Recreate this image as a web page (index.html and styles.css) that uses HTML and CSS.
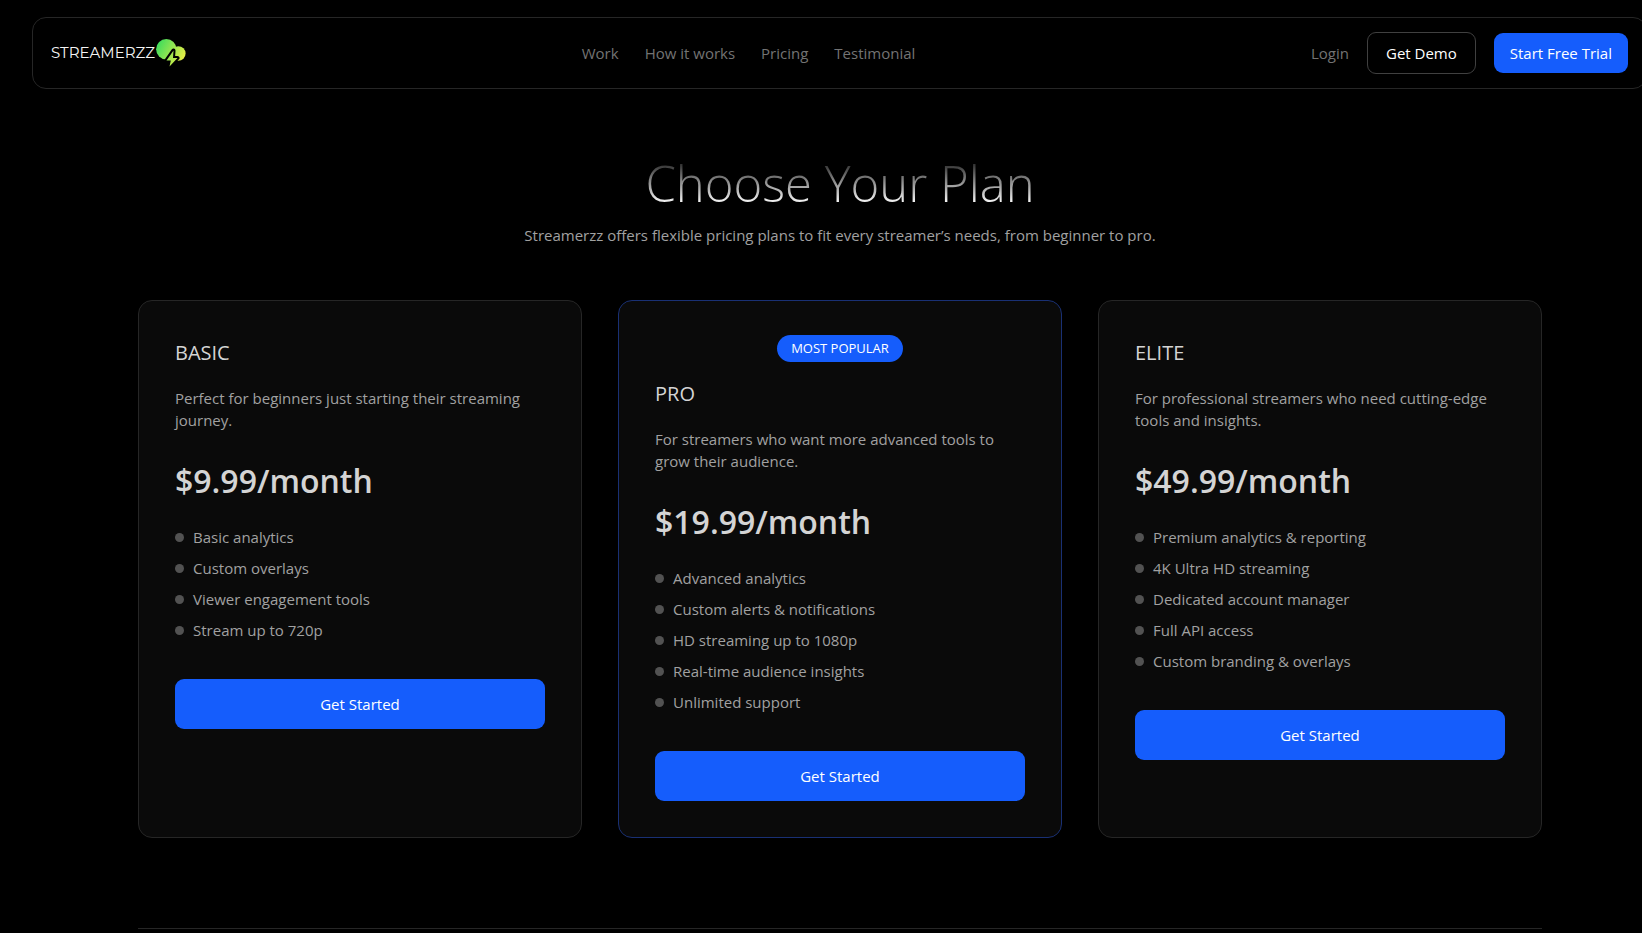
FILE: index.html
```html
<!DOCTYPE html>
<html lang="en">
<head>
<meta charset="utf-8">
<meta name="viewport" content="width=device-width, initial-scale=1">
<title>Streamerzz – Pricing</title>
<link rel="stylesheet" href="styles.css">
</head>
<body>
<header class="navbar">
  <a class="logo" href="#">
    <span class="logo-text">STREAMERZZ</span>
    <svg class="logo-mark" viewBox="0 0 30 28" aria-hidden="true">
      <defs>
        <linearGradient id="mark" x1="0" y1="0" x2="30" y2="16" gradientUnits="userSpaceOnUse">
          <stop offset="0.1" stop-color="#3fdc5c"/>
          <stop offset="1" stop-color="#e8ee45"/>
        </linearGradient>
      </defs>
      <g fill="url(#mark)">
        <circle cx="10.300" cy="10.300" r="10.200"/>
        <circle cx="22.300" cy="14.500" r="7.300"/>
        <path d="M17.500 11.500L10.500 21.500H14.800L13.500 27.500L21.500 19H17Z" stroke="#000" stroke-width="4" stroke-linejoin="round" paint-order="stroke"/>
      </g>
    </svg>
  </a>
  <nav class="nav-links" aria-label="Main">
    <a href="#">Work</a>
    <a href="#">How it works</a>
    <a href="#">Pricing</a>
    <a href="#">Testimonial</a>
  </nav>
  <div class="nav-actions">
    <a href="#">Login</a>
    <button class="btn btn-outline" type="button">Get Demo</button>
    <button class="btn btn-primary" type="button">Start Free Trial</button>
  </div>
</header>
<main class="page">
  <section class="pricing">
    <div class="intro">
      <h1>Choose Your Plan</h1>
      <p>Streamerzz offers flexible pricing plans to fit every streamer’s needs, from beginner to pro.</p>
    </div>
    <div class="plans">
      <article class="plan">
        <h2>BASIC</h2>
        <p class="plan-desc">Perfect for beginners just starting their streaming journey.</p>
        <p class="price">$9.99/month</p>
        <ul class="features">
          <li>Basic analytics</li>
          <li>Custom overlays</li>
          <li>Viewer engagement tools</li>
          <li>Stream up to 720p</li>
        </ul>
        <button class="btn btn-primary btn-wide" type="button">Get Started</button>
      </article>
      <article class="plan plan-popular">
        <span class="badge">MOST POPULAR</span>
        <h2>PRO</h2>
        <p class="plan-desc">For streamers who want more advanced tools to grow their audience.</p>
        <p class="price">$19.99/month</p>
        <ul class="features">
          <li>Advanced analytics</li>
          <li>Custom alerts &amp; notifications</li>
          <li>HD streaming up to 1080p</li>
          <li>Real-time audience insights</li>
          <li>Unlimited support</li>
        </ul>
        <button class="btn btn-primary btn-wide" type="button">Get Started</button>
      </article>
      <article class="plan">
        <h2>ELITE</h2>
        <p class="plan-desc">For professional streamers who need cutting-edge tools and insights.</p>
        <p class="price">$49.99/month</p>
        <ul class="features">
          <li>Premium analytics &amp; reporting</li>
          <li>4K Ultra HD streaming</li>
          <li>Dedicated account manager</li>
          <li>Full API access</li>
          <li>Custom branding &amp; overlays</li>
        </ul>
        <button class="btn btn-primary btn-wide" type="button">Get Started</button>
      </article>
    </div>
  </section>
  <footer class="footer"></footer>
</main>
</body>
</html>
```
FILE: styles.css
```css
*, *::before, *::after { box-sizing: border-box; }

html { background: #000; }

body {
  margin: 0;
  overflow-x: hidden;
  background: #000;
  color: #a1a1a1;
  font: 400 15px/22px "Segoe UI", "Open Sans", "Noto Sans", sans-serif;
}

h1, h2, p, ul { margin: 0; padding: 0; }
a { color: inherit; text-decoration: none; }

.navbar {
  display: flex;
  align-items: center;
  justify-content: space-between;
  margin: 17px -5px 0 32px;
  padding: 14px 18px;
  border: 1px solid #262626;
  border-radius: 14px;
  color: #737373;
}

.logo { display: flex; align-items: center; gap: 1px; color: #f5f5f5; }
.logo-text { font: 400 15px/24px Montserrat, "Open Sans", sans-serif; }
.logo-mark { width: 30px; height: 28px; }

.nav-links { display: flex; gap: 26px; }
.nav-actions { display: flex; align-items: center; gap: 18px; }

.btn {
  padding: 9px 16px;
  border: 0;
  border-radius: 9px;
  color: #fff;
  font: inherit;
  cursor: pointer;
}
.btn-outline { padding: 9px 18px; border: 1px solid #404040; background: transparent; font-weight: 500; }
.btn-primary { background: #155dfc; }
.btn-wide { width: 100%; padding: 14px 18px; }

.page { padding: 0 100px 0 138px; }
.pricing { padding: 62px 0 90px; }

.intro { display: flex; flex-direction: column; align-items: center; gap: 9px; text-align: center; }

h1 {
  font-size: 49px;
  font-weight: 300;
  line-height: 64px;
  background: linear-gradient(to bottom, #303030 20%, #f5f5f5 80%);
  -webkit-background-clip: text;
  background-clip: text;
  color: transparent;
}

.plans {
  display: grid;
  grid-template-columns: repeat(3, minmax(0, 1fr));
  gap: 36px;
  margin-top: 54px;
}

.plan {
  display: flex;
  flex-direction: column;
  align-items: flex-start;
  padding: 36px;
  border: 1px solid #262626;
  border-radius: 14px;
  background: #0a0a0a;
}
.plan-popular { border-color: #193074; padding-top: 34px; }

.badge {
  align-self: center;
  margin-bottom: 16px;
  padding: 3px 14px;
  border-radius: 14px;
  background: #155dfc;
  color: #fff;
  font-size: 13px;
  line-height: 21px;
}

h2 { color: #d4d4d4; font-size: 20px; font-weight: 400; line-height: 32px; }
.plan-desc { margin-top: 18px; }
.price { margin-top: 30px; color: #d4d4d4; font-size: 32px; font-weight: 600; line-height: 40px; }

.features { display: grid; gap: 9px; margin: 25px 0 38px; list-style: none; }
.features li { display: flex; align-items: center; gap: 9px; }
.features li::before { content: ""; width: 9px; height: 9px; border-radius: 50%; background: #525252; }

.footer { height: 80px; border-top: 1px solid #262626; }
```
